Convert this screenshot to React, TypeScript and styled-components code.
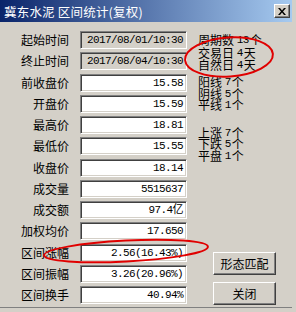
import React from 'react';
import styled, { createGlobalStyle } from 'styled-components';

const GlobalStyle = createGlobalStyle`
  body {
    margin: 0;
    background: #d4d0c8;
  }
`;

const CJK = `"Noto Sans CJK SC", "Liberation Sans", sans-serif`;
const MONO = `"Liberation Mono", "Noto Sans CJK SC", monospace`;

const Window = styled.div`
  position: relative;
  width: 296px;
  height: 312px;
  box-sizing: border-box;
  background: #d4d0c8;
  display: flex;
  flex-direction: column;
  padding: 0 4px 0 0;
  font-family: ${CJK};
  font-size: 12px;
  color: #000;
  overflow: hidden;
  border-bottom: 4px solid #d4d0c8;
`;

const TitleBar = styled.div`
  height: 22px;
  flex: none;
  display: flex;
  align-items: center;
  padding: 0 2px 0 4px;
  background: linear-gradient(to right, #0a246a, #a6caf0);
`;

const Title = styled.span`
  color: #fff;
  font-size: 12.5px;
  letter-spacing: 0.2px;
  white-space: pre;
`;

const CloseBtn = styled.div`
  margin-left: auto;
  width: 16px;
  height: 14px;
  box-sizing: border-box;
  background: #d4d0c8;
  border: 1px solid;
  border-color: #fff #404040 #404040 #fff;
  box-shadow: inset -1px -1px 0 #808080;
  display: flex;
  align-items: center;
  justify-content: center;
`;

const Body = styled.div`
  flex: 1;
  min-height: 0;
  display: flex;
  border-bottom: 1px solid #808080;
`;

const Fields = styled.div`
  display: grid;
  grid-template-columns: 69px 107px;
  grid-auto-rows: 18px;
  column-gap: 11px;
  row-gap: 3.25px;
  padding-top: 9px;
  align-content: start;
`;

const Label = styled.div`
  text-align: right;
  line-height: 18px;
  font-size: 12px;
  white-space: nowrap;
`;

const Box = styled.div<{ $grey?: boolean }>`
  box-sizing: border-box;
  height: 18px;
  background: ${({ $grey }) => ($grey ? '#d4d0c8' : '#fff')};
  border: 1px solid;
  border-color: #808080 #fff #fff #808080;
  box-shadow: inset 1px 1px 0 #404040, inset -1px -1px 0 #d4d0c8;
  text-align: right;
  padding: 0 3px 0 0;
  font-family: ${MONO};
  font-size: 11px;
  letter-spacing: -0.6px;
  line-height: 16px;
  white-space: nowrap;
  overflow: hidden;
`;

const Side = styled.div`
  display: flex;
  flex-direction: column;
  margin-left: 11px;
  padding: 12px 0 2px;
  flex: 1;
`;

const Group = styled.div<{ $gap: number }>`
  display: flex;
  flex-direction: column;
  margin-top: ${({ $gap }) => $gap}px;
  font-size: 12px;
`;

const Line = styled.div<{ $h: number }>`
  white-space: pre;
  height: ${({ $h }) => $h}px;
  line-height: 12px;
  display: flex;
  align-items: center;
`;

const Num = styled.span`
  font-family: ${MONO};
  font-size: 11px;
  letter-spacing: -0.6px;
  line-height: 12px;
  margin-right: 1px;
`;

const Buttons = styled.div`
  display: flex;
  flex-direction: column;
  gap: 7px;
  margin-top: auto;
  margin-left: 15px;
`;

const Button = styled.div`
  width: 63px;
  height: 23px;
  box-sizing: border-box;
  border: 1px solid;
  border-color: #fff #404040 #404040 #fff;
  box-shadow: inset -1px -1px 0 #808080;
  display: flex;
  align-items: center;
  justify-content: center;
  font-size: 12px;
`;

const Overlay = styled.svg`
  position: absolute;
  left: 0;
  top: 0;
  pointer-events: none;
`;

const rows: { label: string; value: string; grey?: boolean }[] = [
  { label: '起始时间', value: '2017/08/01/10:30', grey: true },
  { label: '终止时间', value: '2017/08/04/10:30', grey: true },
  { label: '前收盘价', value: '15.58' },
  { label: '开盘价', value: '15.59' },
  { label: '最高价', value: '18.81' },
  { label: '最低价', value: '15.55' },
  { label: '收盘价', value: '18.14' },
  { label: '成交量', value: '5515637' },
  { label: '成交额', value: '97.4亿' },
  { label: '加权均价', value: '17.650' },
  { label: '区间涨幅', value: '2.56(16.43%)' },
  { label: '区间振幅', value: '3.26(20.96%)' },
  { label: '区间换手', value: '40.94%' },
];

const stat = (h: number, name: string, n: string, unit: string) => (
  <Line key={name} $h={h}>
    {name} <Num>{n}</Num>
    {unit}
  </Line>
);

export default function App() {
  return (
    <>
      <GlobalStyle />
      <Window>
        <TitleBar>
          <Title>冀东水泥 区间统计(复权)</Title>
          <CloseBtn>
            <svg width="8" height="7" viewBox="0 0 8 7">
              <path d="M0 0L2 0L4 2.5L6 0L8 0L5 3.5L8 7L6 7L4 4.5L2 7L0 7L3 3.5Z" fill="#000" />
            </svg>
          </CloseBtn>
        </TitleBar>
        <Body>
          <Fields>
            {rows.map((r) => (
              <React.Fragment key={r.label}>
                <Label>{r.label}</Label>
                <Box $grey={r.grey}>{r.value}</Box>
              </React.Fragment>
            ))}
          </Fields>
          <Side>
            <Group $gap={0}>
              {stat(12.5, '周期数', '13', '个')}
              {stat(12.5, '交易日', '4', '天')}
              {stat(12.5, '自然日', '4', '天')}
            </Group>
            <Group $gap={5}>
              {stat(11.5, '阳线', '7', '个')}
              {stat(11.5, '阴线', '5', '个')}
              {stat(11.5, '平线', '1', '个')}
            </Group>
            <Group $gap={16}>
              {stat(11.5, '上涨', '7', '个')}
              {stat(11.5, '下跌', '5', '个')}
              {stat(11.5, '平盘', '1', '个')}
            </Group>
            <Buttons>
              <Button>形态匹配</Button>
              <Button>关闭</Button>
            </Buttons>
          </Side>
        </Body>
        <Overlay width="296" height="312">
          <ellipse cx="229" cy="57" rx="44" ry="19.5" transform="rotate(-4 229 57)" fill="none" stroke="#e00000" strokeWidth="2" />
          <ellipse cx="126" cy="251" rx="82" ry="10.5" transform="rotate(-3 126 251)" fill="none" stroke="#e00000" strokeWidth="2" />
        </Overlay>
      </Window>
    </>
  );
}
